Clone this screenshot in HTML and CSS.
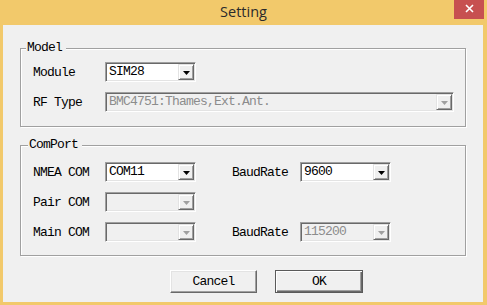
FILE: index.html
```html
<!DOCTYPE html>
<html lang="en">
<head>
    <meta charset="UTF-8">
    <title>Setting</title>
    <link rel="stylesheet" href="styles.css">
</head>
<body>

    <div class="window">
        <div class="titlebar">
            <span class="title">Setting</span>
            <span class="close">
                <svg width="9" height="9" viewBox="0 0 9 9"><path d="M1 1 L8 8 M8 1 L1 8" stroke="#fff" stroke-width="1.6"/></svg>
            </span>
        </div>

        <div class="client">
            <div class="group group-model">
                <span class="legend">Model</span>
                <div class="rows">
                    <span class="label">Module</span>
                    <div class="combo short">
                        <span class="value">SIM28</span>
                        <span class="drop"><svg width="7" height="4" viewBox="0 0 7 4"><polygon points="0,0 7,0 3.5,4"/></svg></span>
                    </div>
                    <span class="label">RF Type</span>
                    <div class="combo disabled">
                        <span class="value">BMC4751:Thames,Ext.Ant.</span>
                        <span class="drop"><svg width="7" height="4" viewBox="0 0 7 4"><polygon points="0,0 7,0 3.5,4"/></svg></span>
                    </div>
                </div>
            </div>

            <div class="group group-port">
                <span class="legend">ComPort</span>
                <div class="rows ports">
                    <span class="label">NMEA COM</span>
                    <div class="combo">
                        <span class="value">COM11</span>
                        <span class="drop"><svg width="7" height="4" viewBox="0 0 7 4"><polygon points="0,0 7,0 3.5,4"/></svg></span>
                    </div>
                    <span class="label baud">BaudRate</span>
                    <div class="combo">
                        <span class="value">9600</span>
                        <span class="drop"><svg width="7" height="4" viewBox="0 0 7 4"><polygon points="0,0 7,0 3.5,4"/></svg></span>
                    </div>

                    <span class="label">Pair COM</span>
                    <div class="combo disabled">
                        <span class="value"></span>
                        <span class="drop"><svg width="7" height="4" viewBox="0 0 7 4"><polygon points="0,0 7,0 3.5,4"/></svg></span>
                    </div>

                    <span class="label">Main COM</span>
                    <div class="combo disabled">
                        <span class="value"></span>
                        <span class="drop"><svg width="7" height="4" viewBox="0 0 7 4"><polygon points="0,0 7,0 3.5,4"/></svg></span>
                    </div>
                    <span class="label baud">BaudRate</span>
                    <div class="combo disabled">
                        <span class="value">115200</span>
                        <span class="drop"><svg width="7" height="4" viewBox="0 0 7 4"><polygon points="0,0 7,0 3.5,4"/></svg></span>
                    </div>
                </div>
            </div>

            <div class="buttons">
                <button class="btn">Cancel</button>
                <button class="btn btn-default">OK</button>
            </div>
        </div>
    </div>

</body>
</html>
```

FILE: styles.css
```css
body {
    margin: 0;
    padding: 0;
    background-color: #f2c96b;
    font-family: "Liberation Mono", "Courier New", monospace;
    font-size: 13px;
    letter-spacing: -0.8px;
    color: #000;
}
.window {
    width: 487px;
    height: 305px;
    display: flex;
    flex-direction: column;
}
.titlebar {
    height: 25px;
    display: grid;
    grid-template-columns: 1fr auto 1fr;
    align-items: start;
}
.title {
    grid-column: 2;
    font-family: "Open Sans", "Noto Sans", sans-serif;
    font-size: 14.5px;
    letter-spacing: 0;
    color: #2b2b2b;
    line-height: 23px;
}
.close {
    grid-column: 3;
    justify-self: end;
    width: 30px;
    height: 19px;
    margin-right: 3px;
    background-color: #c75050;
    display: flex;
    align-items: center;
    justify-content: center;
}
.close svg {
    margin-top: -2px;
}
.client {
    height: 277px;
    margin: 0 4px 0 3px;
    padding: 23px 17px 0;
    box-sizing: border-box;
    background-color: #f0f0f0;
}
.group {
    border: 1px solid #a0a0a0;
    box-shadow: inset 1px 1px 0 #fff, 1px 1px 0 #fff;
    padding: 0 11px 14px 12px;
}
.group-port {
    margin-top: 18px;
    padding-bottom: 13px;
}
.legend {
    display: block;
    width: fit-content;
    height: 14px;
    line-height: 14px;
    margin: -8px 0 0 -7px;
    padding: 0 4px 0 1px;
    background-color: #f0f0f0;
}
.group-port .legend {
    margin-left: -5px;
}
.rows {
    display: grid;
    grid-template-columns: 72px 1fr;
    grid-auto-rows: 20px;
    row-gap: 10px;
    align-items: center;
    margin-top: 7px;
}
.rows.ports {
    grid-template-columns: 72px 91px 36px 68px 91px;
    margin-top: 10px;
}
.label {
    grid-column: 1;
    white-space: nowrap;
}
.ports .baud {
    grid-column: 4;
}
.combo {
    height: 20px;
    box-sizing: border-box;
    border: 1px solid;
    border-color: #a0a0a0 #fff #fff #a0a0a0;
    box-shadow: inset 1px 1px 0 #696969, inset -1px -1px 0 #e3e3e3;
    background-color: #fff;
    display: flex;
    padding: 1px;
}
.combo.short {
    width: 91px;
}
.value {
    flex: 1;
    padding-left: 2px;
    line-height: 16px;
    white-space: nowrap;
    overflow: hidden;
}
.drop {
    width: 16px;
    height: 16px;
    box-sizing: border-box;
    border: 1px solid;
    border-color: #e3e3e3 #696969 #696969 #e3e3e3;
    box-shadow: inset 1px 1px 0 #fff, inset -1px -1px 0 #a0a0a0;
    background-color: #f0f0f0;
    display: flex;
    align-items: center;
    justify-content: center;
}
.drop svg {
    fill: #000;
    margin-top: 1px;
}
.combo.disabled {
    background-color: #f0f0f0;
    color: #8c8c8c;
}
.combo.disabled .drop svg {
    fill: #a0a0a0;
}
.buttons {
    display: flex;
    gap: 18px;
    margin-top: 14px;
    padding-left: 150px;
}
.btn {
    width: 87px;
    height: 23px;
    font-family: "Liberation Mono", "Courier New", monospace;
    font-size: 13px;
    letter-spacing: -0.8px;
    color: #000;
    background-color: #f0f0f0;
    border: 1px solid;
    border-color: #fff #696969 #696969 #fff;
    box-shadow: inset -1px -1px 0 #a0a0a0, inset 1px 1px 0 #e3e3e3;
    padding: 0;
}
.btn-default {
    width: 88px;
    border-color: #5a5a5a;
    box-shadow: inset 1px 1px 0 #fff, inset -1px -1px 0 #696969, inset -2px -2px 0 #a0a0a0;
}
```
